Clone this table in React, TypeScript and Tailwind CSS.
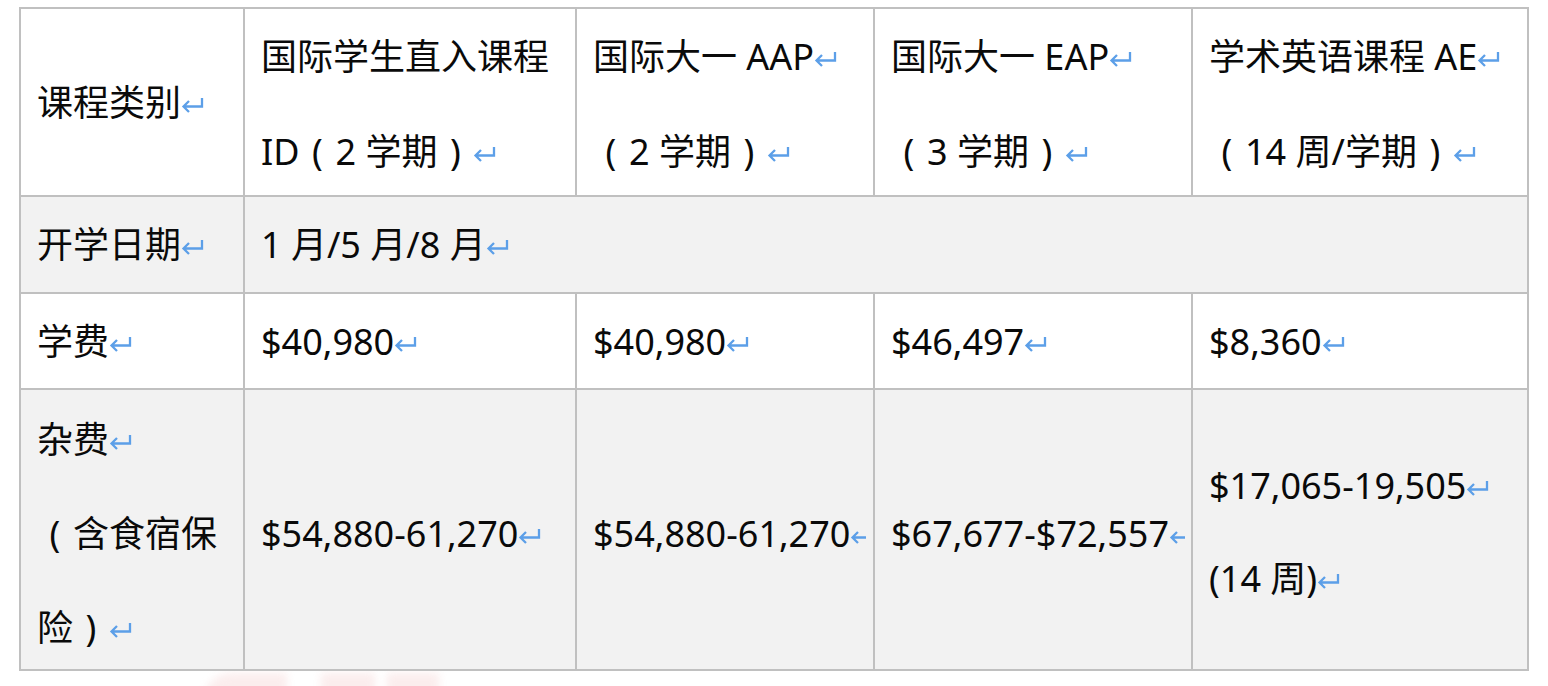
import type { ReactNode } from 'react'

// Paragraph mark, as Word shows it.
function Ret({ cut }: { cut?: boolean }) {
  return (
    <svg
      className="inline-block align-middle -mt-[3px]"
      width={cut ? 16 : 24}
      height="17"
      viewBox={cut ? '0 0 16 17' : '0 0 24 17'}
      fill="none"
      stroke="#5c9fe8"
      strokeWidth="2.3"
    >
      {cut ? (
        <path d="M16 10.5H2.5M8 5l-5.5 5.5L8 16" />
      ) : (
        <path d="M21 2v8.5H2.5M8 5l-5.5 5.5L8 16" />
      )}
    </svg>
  )
}

// Full-width bracket, ink centred in its em box as in the source document.
function P({ children }: { children: ReactNode }) {
  return <span className="inline-block w-[36px] text-center">{children}</span>
}

function Cell({
  children,
  colSpan,
  inner = '',
}: {
  children: ReactNode
  colSpan?: number
  inner?: string
}) {
  return (
    <td
      colSpan={colSpan}
      className="border-2 border-[#c0c0c0] pl-4 pr-0 align-middle whitespace-nowrap overflow-hidden"
    >
      <div className={inner}>{children}</div>
    </td>
  )
}

const head = 'leading-[95px] -mb-[4px]'

export default function App() {
  return (
    <div
      className="min-h-screen bg-white pt-[7px] pl-[19px] text-[36px] leading-[93px] text-[#0a0a0a]"
      style={{ fontFamily: '"Noto Sans", "Noto Sans CJK SC", sans-serif' }}
    >
      <table className="table-fixed border-collapse w-[1508px]">
        <colgroup>
          <col className="w-[224px]" />
          <col className="w-[332px]" />
          <col className="w-[298px]" />
          <col className="w-[318px]" />
          <col className="w-[336px]" />
        </colgroup>
        <tbody>
          <tr className="h-[188px] bg-white">
            <Cell>
              课程类别
              <Ret />
            </Cell>
            <Cell inner={head}>
              国际学生直入课程
              <br />
              ID<P>(</P>2 学期<P>)</P>
              <Ret />
            </Cell>
            <Cell inner={head}>
              国际大一 AAP
              <Ret />
              <br />
              <P>(</P>2 学期<P>)</P>
              <Ret />
            </Cell>
            <Cell inner={head}>
              国际大一 EAP
              <Ret />
              <br />
              <P>(</P>3 学期<P>)</P>
              <Ret />
            </Cell>
            <Cell inner={head}>
              学术英语课程 AE
              <Ret />
              <br />
              <P>(</P>14 周/学期<P>)</P>
              <Ret />
            </Cell>
          </tr>
          <tr className="h-[97px] bg-[#f2f2f2]">
            <Cell>
              开学日期
              <Ret />
            </Cell>
            <Cell colSpan={4}>
              1 月/5 月/8 月
              <Ret />
            </Cell>
          </tr>
          <tr className="h-[96px] bg-white">
            <Cell>
              学费
              <Ret />
            </Cell>
            <Cell>
              $40,980
              <Ret />
            </Cell>
            <Cell>
              $40,980
              <Ret />
            </Cell>
            <Cell>
              $46,497
              <Ret />
            </Cell>
            <Cell>
              $8,360
              <Ret />
            </Cell>
          </tr>
          <tr className="h-[281px] bg-[#f2f2f2]">
            <Cell inner="leading-[94px] pt-[3px] -mb-[6px]">
              杂费
              <Ret />
              <br />
              <P>(</P>含食宿保
              <br />
              险<P>)</P>
              <Ret />
            </Cell>
            <Cell inner="pt-[4px] -mb-[4px]">
              $54,880-61,270
              <Ret />
            </Cell>
            <Cell inner="pt-[4px] -mb-[4px]">
              $54,880-61,270
              <Ret cut />
            </Cell>
            <Cell inner="pt-[4px] -mb-[4px]">
              $67,677-$72,557
              <Ret cut />
            </Cell>
            <Cell inner="pt-[2px] -mb-[2px]">
              $17,065-19,505
              <Ret />
              <br />
              (14 周)
              <Ret />
            </Cell>
          </tr>
        </tbody>
      </table>

      {/* faint watermark peeking out under the table */}
      <div className="flex h-[20px] overflow-hidden pt-[2px] opacity-35">
        <div className="ml-[184px] h-[40px] w-[84px] rounded-tl-[30px] bg-[#f4cccc] blur-[4px]" />
        <div className="ml-[34px] h-[40px] w-[54px] bg-[#f4cccc] blur-[4px]" />
        <div className="ml-[12px] h-[40px] w-[52px] bg-[#f4cccc] blur-[4px]" />
      </div>
    </div>
  )
}
